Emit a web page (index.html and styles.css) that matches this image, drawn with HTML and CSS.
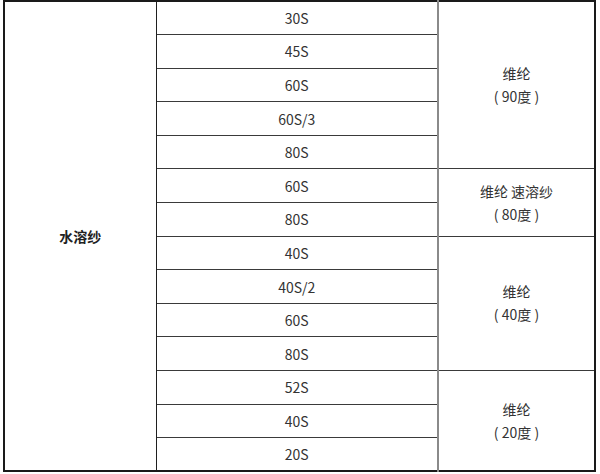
FILE: index.html
```html
<!DOCTYPE html>
<html lang="zh">
<head>
<meta charset="utf-8">
<link rel="stylesheet" href="styles.css">
</head>
<body>
<div class="wrap">
<table class="spec">
  <colgroup>
    <col class="c1"><col class="c2"><col class="c3">
  </colgroup>
  <tbody>
    <tr><td class="name" rowspan="14">水溶纱</td><td class="count">30S</td><td class="mat" rowspan="5">维纶<br>( 90度 )</td></tr>
    <tr><td class="count">45S</td></tr>
    <tr><td class="count">60S</td></tr>
    <tr><td class="count">60S/3</td></tr>
    <tr><td class="count">80S</td></tr>
    <tr><td class="count">60S</td><td class="mat" rowspan="2">维纶 速溶纱<br>( 80度 )</td></tr>
    <tr><td class="count">80S</td></tr>
    <tr><td class="count">40S</td><td class="mat" rowspan="4">维纶<br>( 40度 )</td></tr>
    <tr><td class="count">40S/2</td></tr>
    <tr><td class="count">60S</td></tr>
    <tr><td class="count">80S</td></tr>
    <tr><td class="count">52S</td><td class="mat" rowspan="3">维纶<br>( 20度 )</td></tr>
    <tr><td class="count">40S</td></tr>
    <tr><td class="count">20S</td></tr>
  </tbody>
</table>
</div>
</body>
</html>
```

FILE: styles.css
```css
html, body {
  margin: 0;
  padding: 0;
  background: #ffffff;
}
.wrap {
  padding: 0 0 0 3px;
}
.spec {
  border-collapse: collapse;
  width: 591px;
  border: 2px solid #1a1a1a;
  font-family: "Noto Sans CJK SC", "Microsoft YaHei", sans-serif;
  font-size: 14px;
  color: #333333;
  table-layout: fixed;
}
.c1 { width: 152px; }
.c2 { width: 282px; }
.c3 { width: 157px; }
.spec tr {
  height: 33.6px;
}
.spec td {
  padding: 0;
  text-align: center;
  vertical-align: middle;
  border: 1px solid #3a3a3a;
}
.spec td.name {
  font-weight: bold;
  color: #222222;
  border-right: 1px solid #1f1f1f;
}
.spec td.count {
  line-height: 20px;
}
.spec td.mat {
  line-height: 23px;
  border-left: 2px solid #8a8a8a;
  border-right: 2px solid #1a1a1a;
}
```
